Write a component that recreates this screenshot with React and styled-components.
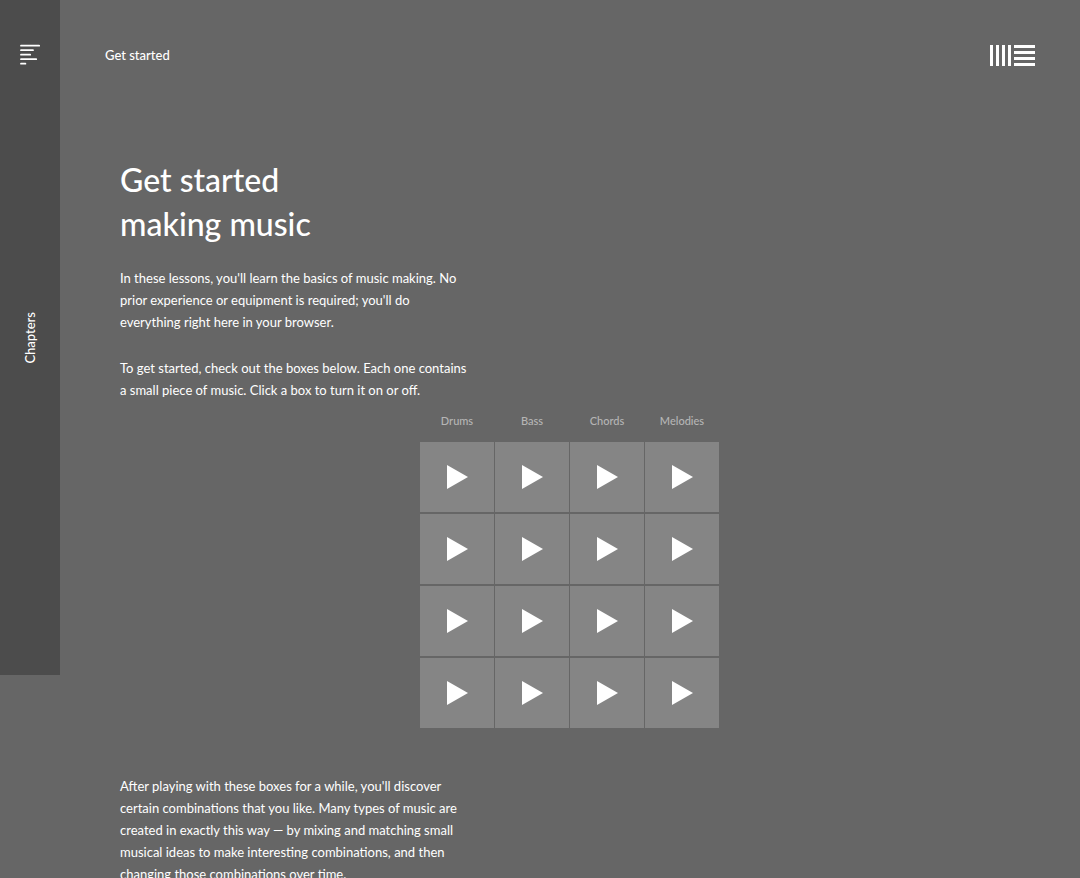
import React, { useState } from 'react'
import styled, { createGlobalStyle } from 'styled-components'

const tracks = ['Drums', 'Bass', 'Chords', 'Melodies']
const rows = [1, 2, 3, 4]

const MenuIcon = () => (
  <svg width="20" height="21" viewBox="0 0 20 21" fill="none" stroke="#fff" strokeWidth="1.8" strokeLinecap="round">
    <path d="M1 1.7H19.2M1 6.2H13M1 10.7H10.2M1 15.2H16.2M1 19.7H5.4" />
  </svg>
)

const Logo = () => (
  <svg width="45" height="21" viewBox="0 0 45 21" fill="#fff">
    <path d="M0 0h3v21H0zM6 0h3v21H6zM12 0h3v21h-3zM18 0h3v21h-3z" />
    <path d="M24 0h21v3H24zM24 6h21v3H24zM24 12h21v3H24zM24 18h21v3H24z" />
  </svg>
)

const App = () => {
  const [playing, setPlaying] = useState({})
  const toggle = (id) => {
    setPlaying(prevState => ({ ...prevState, [id]: !prevState[id] }))
  }
  return (
    <>
      <GlobalStyle />
      <Page>
        <SideBar>
          <MenuButton aria-label="Menu"><MenuIcon /></MenuButton>
          <ChaptersButton>Chapters</ChaptersButton>
        </SideBar>
        <Main>
          <Header>
            <HeaderLink href="#start">Get started</HeaderLink>
            <LogoLink href="#home" aria-label="Home"><Logo /></LogoLink>
          </Header>
          <Content>
            <Title>Get started<br />making music</Title>
            <Text>
              In these lessons, you'll learn the basics of music making. No<br />
              prior experience or equipment is required; you'll do<br />
              everything right here in your browser.
            </Text>
            <Text>
              To get started, check out the boxes below. Each one contains<br />
              a small piece of music. Click a box to turn it on or off.
            </Text>
            <Player>
              { tracks.map(track => <TrackName key={track}>{track}</TrackName>) }
              { rows.map(row => tracks.map(track => {
                const id = `${track} ${row}`
                return (
                  <Clip
                    key={id}
                    aria-label={id}
                    aria-pressed={!!playing[id]}
                    $active={playing[id]}
                    onClick={() => toggle(id)}
                  >
                    <svg width="22" height="24" viewBox="0 0 22 24" fill="currentColor">
                      <path d="M1 0L22 12L1 24z" />
                    </svg>
                  </Clip>
                )
              })) }
            </Player>
            <Text>
              After playing with these boxes for a while, you'll discover<br />
              certain combinations that you like. Many types of music are<br />
              created in exactly this way — by mixing and matching small<br />
              musical ideas to make interesting combinations, and then<br />
              changing those combinations over time.
            </Text>
          </Content>
        </Main>
      </Page>
    </>
  )
}

export default App

const GlobalStyle = createGlobalStyle`
  * {
    box-sizing: border-box;
  }
  body {
    margin: 0;
    background: #666;
    color: #fff;
    font-family: Lato, 'Open Sans', sans-serif;
    font-size: 13px;
  }
  button {
    padding: 0;
    border: 0;
    background: none;
    color: inherit;
    font: inherit;
    cursor: pointer;
  }
  a {
    color: inherit;
    text-decoration: none;
  }
  svg {
    display: block;
  }
`

const Page = styled.div`
  display: flex;
  align-items: flex-start;
  height: 100vh;
  overflow-x: hidden;
  overflow-y: auto;
  scrollbar-width: none;
`

const SideBar = styled.nav`
  flex: 0 0 60px;
  min-height: 675px;
  display: grid;
  grid-template-rows: 1fr auto 1fr;
  justify-items: center;
  background: #4c4c4c;
`

const MenuButton = styled.button`
  align-self: start;
  padding: 44px 20px 20px;
`

const ChaptersButton = styled.button`
  writing-mode: vertical-rl;
  transform: rotate(180deg);
  font-weight: 500;
  line-height: 20px;
`

const Main = styled.main`
  flex: 1;
  min-width: 0;
`

const Header = styled.header`
  display: flex;
  justify-content: space-between;
  align-items: center;
  padding: 45px 45px 0;
`

const HeaderLink = styled.a`
  font-weight: 500;
  line-height: 21px;
`

const LogoLink = styled.a`
  display: block;
`

const Content = styled.div`
  padding: 92px 60px 60px;
`

const Title = styled.h1`
  margin: 0 0 21px;
  font-size: 32px;
  font-weight: 500;
  line-height: 44px;
`

const Text = styled.p`
  margin: 0 0 24px;
  line-height: 22px;
`

const Player = styled.div`
  display: grid;
  grid-template-columns: repeat(4, 74px);
  column-gap: 1px;
  row-gap: 2px;
  max-width: 300px;
  margin: -14px auto 47px;
`

const TrackName = styled.div`
  padding-bottom: 9px;
  color: #b5b5b5;
  font-size: 11px;
  font-weight: 500;
  line-height: 20px;
  text-align: center;
`

const Clip = styled.button`
  display: flex;
  align-items: center;
  justify-content: center;
  height: 70px;
  background: ${props => props.$active ? '#a3a3a3' : '#858585'};
  color: #fff;
`
